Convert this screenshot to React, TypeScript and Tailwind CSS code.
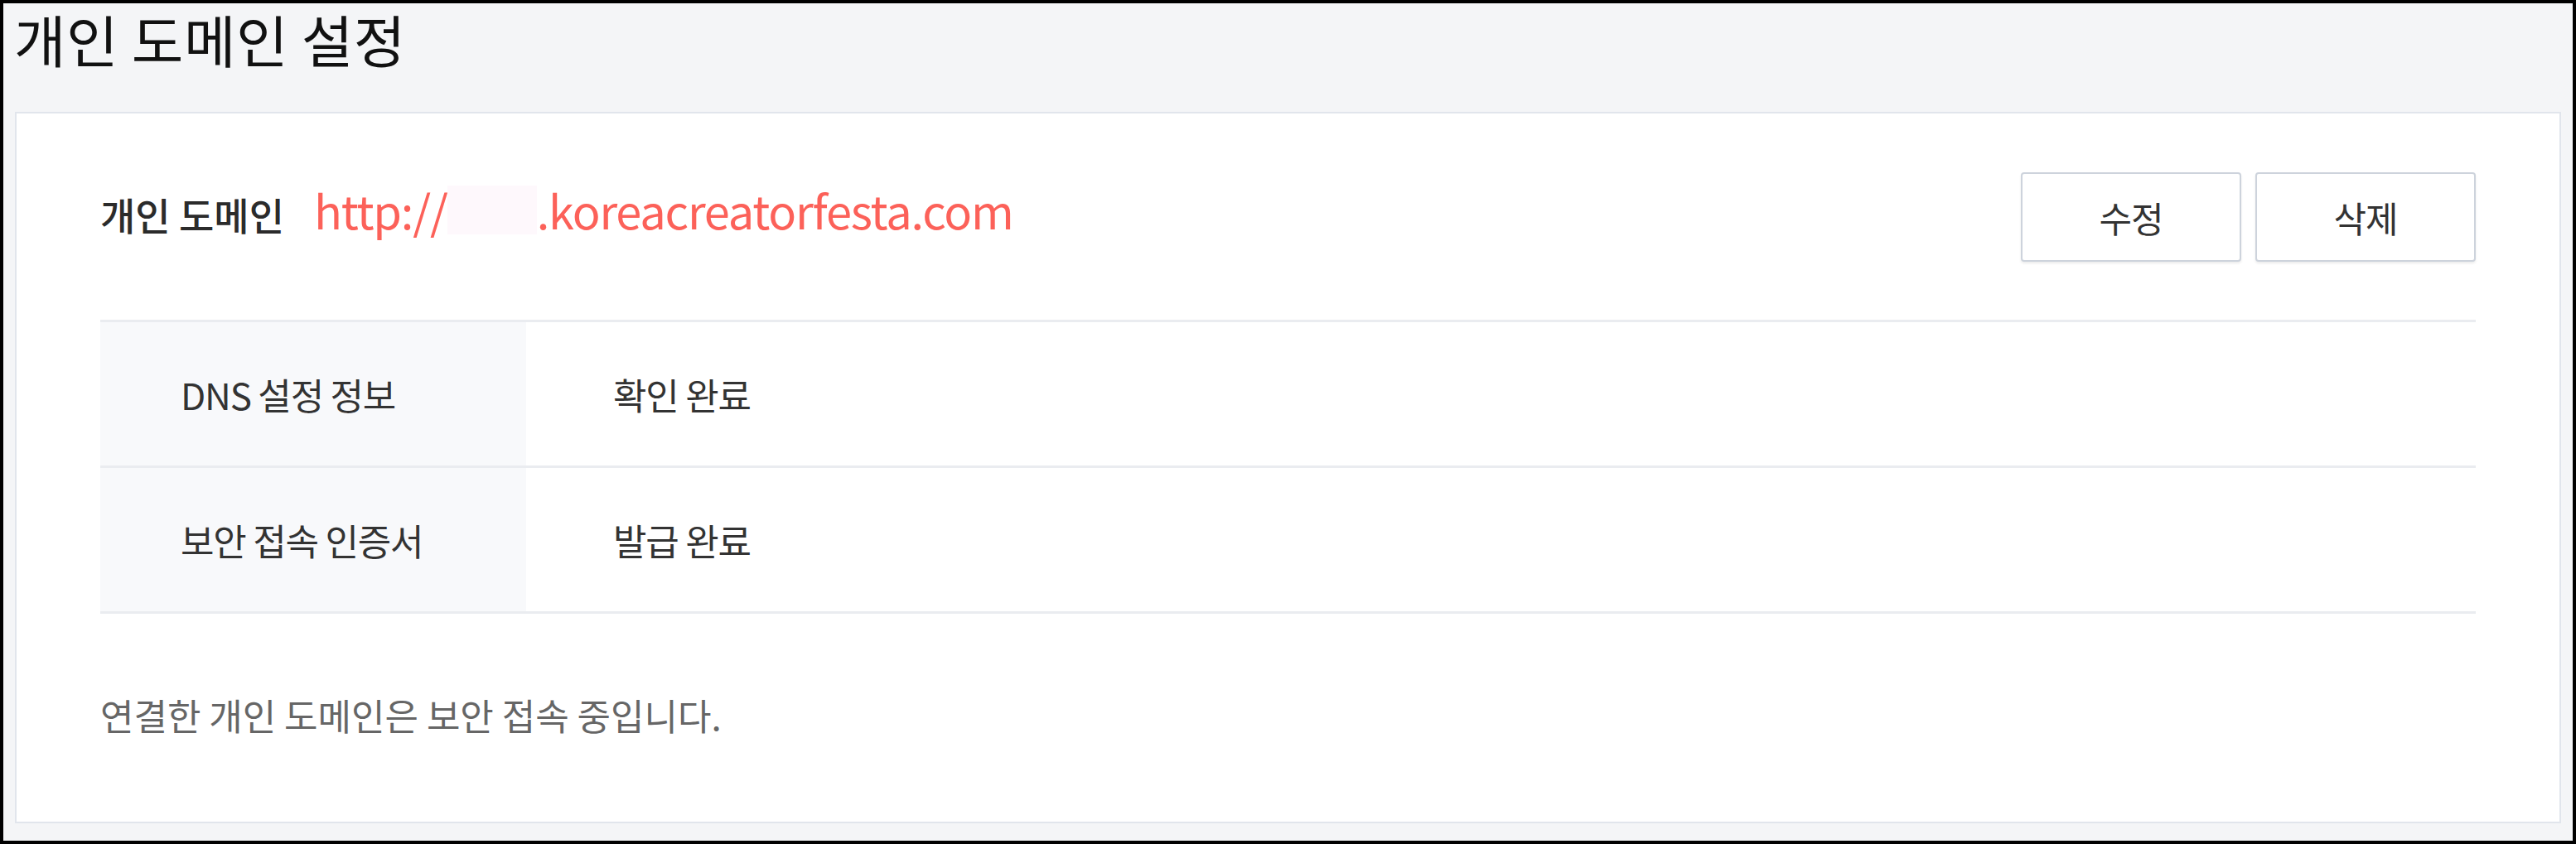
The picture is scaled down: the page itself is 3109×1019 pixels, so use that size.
import React from "react";

const font = "font-['Noto_Sans_CJK_KR','Noto_Sans',sans-serif]";

export default function App() {
  return (
    <div className={`w-[3109px] h-[1019px] border-4 border-black bg-[#f4f5f7] flex flex-col ${font}`}>
      <div className="h-[131px] shrink-0 pl-[13px] pt-[9px]">
        <h1 className="text-[68px] leading-none text-[#111] tracking-[0.5px] font-normal">개인 도메인 설정</h1>
      </div>
      <div className="flex-1 mx-[14px] mb-[21px] border-2 border-[#e1e5ec] bg-white px-[101px] pt-[71px] flex flex-col">
        <div className="h-[108px] flex items-center justify-between">
          <div className="flex items-center pb-[18px]">
            <span className="mt-[9px] text-[46px] leading-none font-medium text-[#2b2b2b]">개인 도메인</span>
            <div className="ml-[36px] flex items-center text-[56px] leading-none text-[#fc6159] tracking-[-1.2px]">
              <span>http://</span>
              <span className="inline-block w-[108px] h-[59px] bg-[#fef8fc]"></span>
              <span>.koreacreatorfesta.com</span>
            </div>
          </div>
          <div className="flex gap-[17px]">
            <button className="w-[266px] h-[108px] border-2 border-[#cdd3dc] rounded-[4px] bg-white shadow-[0_2px_3px_rgba(0,0,0,0.08)] text-[43px] leading-none text-[#333] tracking-[-1px]">수정</button>
            <button className="w-[266px] h-[108px] border-2 border-[#cdd3dc] rounded-[4px] bg-white shadow-[0_2px_3px_rgba(0,0,0,0.08)] text-[43px] leading-none text-[#333] tracking-[-1px]">삭제</button>
          </div>
        </div>
        <div className="mt-[70px] border-t-[3px] border-[#eaecf0]">
          <div className="flex h-[176px] border-b-[3px] border-[#eaecf0]">
            <div className="w-[514px] bg-[#f8f9fb] pl-[97px] flex items-center text-[44px] leading-none text-[#333] tracking-[-1.2px]">DNS 설정 정보</div>
            <div className="pl-[105px] flex items-center text-[44px] leading-none text-[#333] tracking-[-1.2px]">확인 완료</div>
          </div>
          <div className="flex h-[176px] border-b-[3px] border-[#eaecf0]">
            <div className="w-[514px] bg-[#f8f9fb] pl-[97px] flex items-center text-[44px] leading-none text-[#333] tracking-[-1.2px]">보안 접속 인증서</div>
            <div className="pl-[105px] flex items-center text-[44px] leading-none text-[#333] tracking-[-1.2px]">발급 완료</div>
          </div>
        </div>
        <p className="mt-[100px] text-[44px] leading-none text-[#666]">연결한 개인 도메인은 보안 접속 중입니다.</p>
      </div>
    </div>
  );
}
